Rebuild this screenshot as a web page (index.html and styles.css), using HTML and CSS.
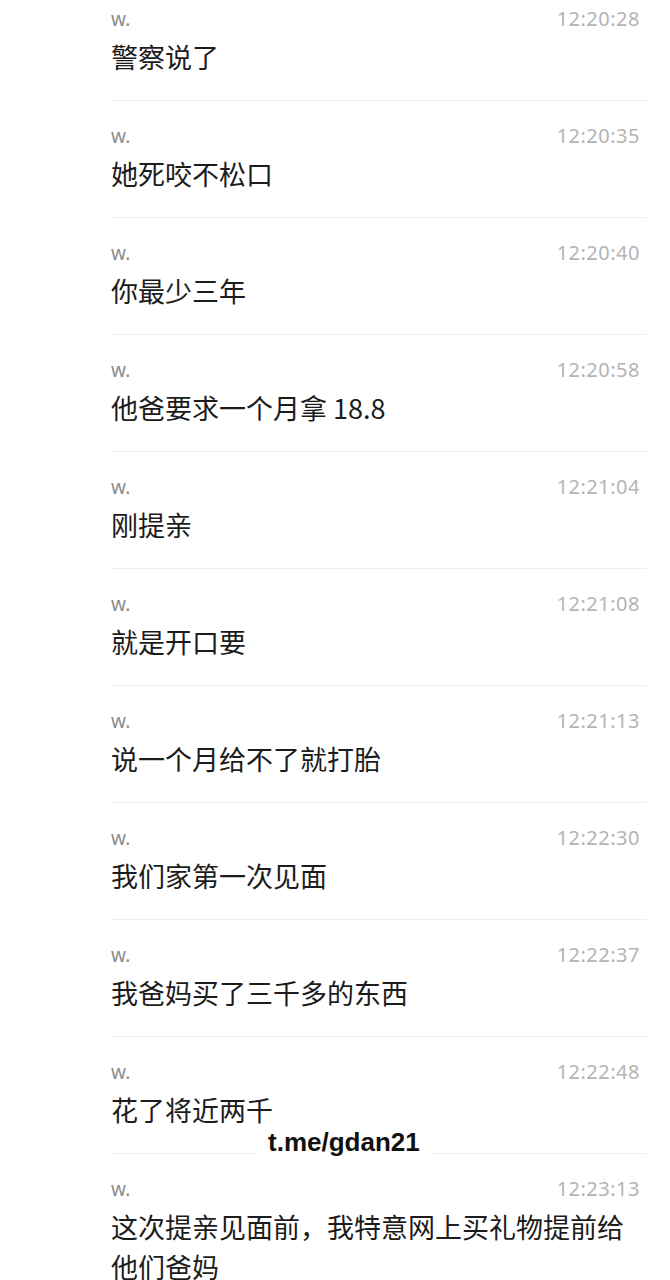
FILE: index.html
```html
<!DOCTYPE html>
<html lang="zh-CN">
<head>
    <meta charset="UTF-8">
    <meta name="viewport" content="width=device-width, initial-scale=1.0">
    <title>聊天记录</title>
    <link rel="stylesheet" href="styles.css">
</head>
<body>
    <main class="chat">
        <div class="row">
            <div class="meta"><span class="name">w.</span><span class="time">12:20:28</span></div>
            <p class="msg">警察说了</p>
        </div>
        <div class="row">
            <div class="meta"><span class="name">w.</span><span class="time">12:20:35</span></div>
            <p class="msg">她死咬不松口</p>
        </div>
        <div class="row">
            <div class="meta"><span class="name">w.</span><span class="time">12:20:40</span></div>
            <p class="msg">你最少三年</p>
        </div>
        <div class="row">
            <div class="meta"><span class="name">w.</span><span class="time">12:20:58</span></div>
            <p class="msg">他爸要求一个月拿 18.8</p>
        </div>
        <div class="row">
            <div class="meta"><span class="name">w.</span><span class="time">12:21:04</span></div>
            <p class="msg">刚提亲</p>
        </div>
        <div class="row">
            <div class="meta"><span class="name">w.</span><span class="time">12:21:08</span></div>
            <p class="msg">就是开口要</p>
        </div>
        <div class="row">
            <div class="meta"><span class="name">w.</span><span class="time">12:21:13</span></div>
            <p class="msg">说一个月给不了就打胎</p>
        </div>
        <div class="row">
            <div class="meta"><span class="name">w.</span><span class="time">12:22:30</span></div>
            <p class="msg">我们家第一次见面</p>
        </div>
        <div class="row">
            <div class="meta"><span class="name">w.</span><span class="time">12:22:37</span></div>
            <p class="msg">我爸妈买了三千多的东西</p>
        </div>
        <div class="row">
            <div class="meta"><span class="name">w.</span><span class="time">12:22:48</span></div>
            <p class="msg">花了将近两千</p>
        </div>
        <div class="row last">
            <div class="meta"><span class="name">w.</span><span class="time">12:23:13</span></div>
            <p class="msg">这次提亲见面前，我特意网上买礼物提前给他们爸妈</p>
        </div>

        <div class="watermark">t.me/gdan21</div>
    </main>
</body>
</html>
```

FILE: styles.css
```css
body {
    margin: 0;
    background-color: #fff;
    font-family: "Noto Sans", "Noto Sans CJK SC", sans-serif;
}

.chat {
    position: relative;
    margin-top: -16px;
    padding: 0 23px 0 111px;
}

.row {
    height: 117px;
    box-sizing: border-box;
    padding-top: 22px;
    border-bottom: 1.5px solid #ededed;
}

.row.last {
    height: auto;
    border-bottom: none;
}

.meta {
    display: flex;
    justify-content: space-between;
    align-items: baseline;
    line-height: 26px;
    padding-right: 7px;
}

.name {
    font-size: 19px;
    color: #8c8c8c;
}

.time {
    font-size: 20px;
    color: #b4b4b4;
    letter-spacing: 0.5px;
}

.msg {
    margin: 5px 0 0;
    font-family: "Noto Sans CJK SC", sans-serif;
    font-size: 27px;
    line-height: 40px;
    color: #1c1c1c;
    padding-right: 7px;
}

.watermark {
    position: absolute;
    top: 1143px;
    left: 258px;
    padding: 0 10px;
    background-color: #fff;
    font-family: "Liberation Sans", Arial, sans-serif;
    font-weight: bold;
    font-size: 26px;
    line-height: 30px;
    color: #111;
}
```
